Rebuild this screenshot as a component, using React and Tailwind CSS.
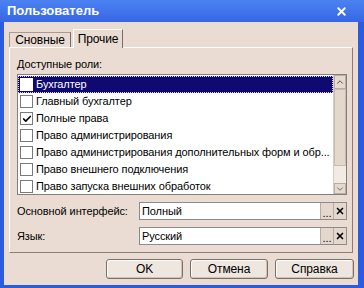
import { Check, X, ChevronUp, ChevronDown } from 'lucide-react';

const roles = [
  { name: 'Бухгалтер', checked: false },
  { name: 'Главный бухгалтер', checked: false },
  { name: 'Полные права', checked: true },
  { name: 'Право администрирования', checked: false },
  { name: 'Право администрирования дополнительных форм и обр...', checked: false },
  { name: 'Право внешнего подключения', checked: false },
  { name: 'Право запуска внешних обработок', checked: false },
];

function CheckBox({ checked, selected }) {
  return (
    <span
      className={`w-[13px] h-[13px] shrink-0 flex items-center justify-center bg-white border ${
        selected ? 'border-white' : 'border-[#7a7a7a]'
      }`}
    >
      {checked && <Check size={10} strokeWidth={4} className="text-black" />}
    </span>
  );
}

function Field({ label, value }) {
  return (
    <div className="flex items-center h-[18px]">
      <span className="w-[122px] shrink-0 whitespace-nowrap">{label}</span>
      <div className="flex-1 h-full flex border border-[#8c8c8c] bg-white">
        <span className="flex-1 px-[2px] leading-[16px]">{value}</span>
        <span className="w-[13px] border-l border-[#b8aca2] bg-[#e4d8ce] flex items-end justify-center leading-[12px] text-[11px]">
          ...
        </span>
        <span className="w-[13px] border-l border-[#b8aca2] bg-[#e4d8ce] flex items-center justify-center">
          <X size={10} strokeWidth={4} className="text-black" />
        </span>
      </div>
    </div>
  );
}

function Button({ children, width }) {
  return (
    <button
      className={`${width} h-[20px] rounded-[3px] border border-[#7a7068] bg-[#eee6df] shadow-[inset_-1px_-1px_0_#cfc3b8,inset_1px_1px_0_#ffffff] leading-[18px]`}
    >
      {children}
    </button>
  );
}

export default function App() {
  return (
    <div
      className="w-[364px] h-[288px] bg-[#2a5be0] flex flex-col text-[11px] tracking-[-0.1px] text-black"
      style={{ fontFamily: '"Liberation Sans", Arial, sans-serif' }}
    >
      <div className="h-[22px] shrink-0 flex items-center justify-between pl-[7px] pr-[16px] bg-gradient-to-b from-[#4b82f2] to-[#3766e6]">
        <span className="text-white font-bold text-[13px] tracking-normal">Пользователь</span>
        <X size={13} strokeWidth={3.5} className="text-white" />
      </div>

      <div className="flex-1 ml-[4px] mr-[6px] mb-[3px] bg-[#eadcd2] flex flex-col pt-[7px] pl-[5px] pr-[5px]">
        {/* tabs */}
        <div className="flex items-end h-[18px] relative z-10 text-[12px]">
          <div className="w-[62px] h-[15px] border border-b-0 border-[#a89a8f] border-r-[#7a6f66] flex items-center justify-center leading-none">
            Сновные
          </div>
          <div className="ml-[2px] w-[50px] h-[19px] -mb-[1px] border border-b-0 border-white border-r-[#7a6f66] bg-[#eadcd2] flex items-center justify-center leading-none">
            Прочие
          </div>
        </div>

        <div className="h-[206px] border border-white border-r-[#8a7f76] border-b-[#8a7f76] pl-[7px] pr-[5px] pt-[9px] flex flex-col">
          <div className="leading-[14px] mb-[3px]">Доступные роли:</div>

          <div className="h-[121px] border border-[#7f7f7f] bg-white flex">
            <div className="flex-1 min-w-0 pt-[1px] overflow-hidden">
              {roles.map((r, i) => (
                <div
                  key={r.name}
                  className={`h-[17px] flex items-center gap-[3px] pl-[2px] whitespace-nowrap ${
                    i === 0 ? 'bg-[#0e0a72] text-white outline outline-1 outline-dotted outline-[#d8d8d8] -outline-offset-1' : ''
                  }`}
                >
                  <CheckBox checked={r.checked} selected={i === 0} />
                  <span>{r.name}</span>
                </div>
              ))}
            </div>
            <div className="w-[13px] shrink-0 bg-[#f2eae3] flex flex-col border-l border-[#d9cdc3]">
              <div className="h-[14px] border border-[#b9aca1] bg-[#e6dad0] flex items-center justify-center">
                <ChevronUp size={10} strokeWidth={2} className="text-[#333]" />
              </div>
              <div className="h-[77px] border border-[#c7bbb1] bg-[#e4d7cc]" />
              <div className="flex-1" />
              <div className="h-[11px] border border-[#b9aca1] bg-[#e6dad0] flex items-center justify-center">
                <ChevronDown size={10} strokeWidth={2} className="text-[#555]" />
              </div>
            </div>
          </div>

          <div className="mt-[7px] flex flex-col gap-[7px]">
            <Field label="Основной интерфейс:" value="Полный" />
            <Field label="Язык:" value="Русский" />
          </div>
        </div>

        <div className="flex justify-end gap-[7px] mt-[6px] -mr-[1px] text-[12px]">
          <Button width="w-[77px]">OK</Button>
          <Button width="w-[78px]">Отмена</Button>
          <Button width="w-[79px]">Справка</Button>
        </div>
      </div>
    </div>
  );
}
